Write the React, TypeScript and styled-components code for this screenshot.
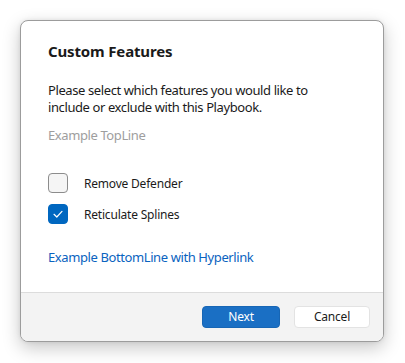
import React from "react";
import styled, { createGlobalStyle } from "styled-components";

const Global = createGlobalStyle`
  html, body { margin: 0; padding: 0; background: #ffffff; }
  body { font-family: "Noto Sans", "Open Sans", sans-serif; }
  * { box-sizing: border-box; }
`;

const Page = styled.div`
  width: 405px;
  height: 363px;
  padding: 20px 21px 21px 20px;
`;

const Dialog = styled.div`
  height: 322px;
  display: flex;
  flex-direction: column;
  background: #ffffff;
  border: 1px solid #9c9c9c;
  border-radius: 8px;
  overflow: hidden;
  box-shadow: 0 6px 18px rgba(0, 0, 0, 0.22), 0 0 4px rgba(0, 0, 0, 0.08);
`;

const Body = styled.div`
  flex: 1;
  display: flex;
  flex-direction: column;
  padding: 19px 27px 0 27px;
`;

const Title = styled.h1`
  margin: 0;
  font-size: 15px;
  line-height: 22px;
  font-weight: 700;
  letter-spacing: -0.15px;
  color: #1a1a1a;
`;

const Text = styled.p`
  margin: 20px 0 0 0;
  font-size: 13px;
  line-height: 17px;
  letter-spacing: -0.4px;
  color: #1b1b1b;
`;

const TopLine = styled.div`
  margin-top: 11px;
  font-size: 13px;
  line-height: 17px;
  letter-spacing: -0.4px;
  color: #9e9e9e;
`;

const Options = styled.div`
  margin-top: 29px;
  display: flex;
  flex-direction: column;
  gap: 11px;
`;

const Row = styled.label`
  display: flex;
  align-items: center;
  gap: 16px;
  font-size: 12px;
  letter-spacing: -0.2px;
  color: #1b1b1b;
`;

const Box = styled.span<{ $checked?: boolean }>`
  width: 20px;
  height: 20px;
  border-radius: 4px;
  flex: none;
  display: flex;
  align-items: center;
  justify-content: center;
  background: ${(p) => (p.$checked ? "#0067c0" : "#f5f5f5")};
  border: 1px solid ${(p) => (p.$checked ? "#0067c0" : "#8c8c8c")};
`;

const Link = styled.a`
  margin-top: 25px;
  font-size: 13px;
  line-height: 17px;
  letter-spacing: -0.4px;
  color: #0a63c0;
  text-decoration: none;
  cursor: pointer;
`;

const Footer = styled.div`
  height: 49px;
  flex: none;
  border-top: 1px solid #dcdcdc;
  background: #f3f3f3;
  display: flex;
  align-items: center;
  justify-content: flex-end;
  gap: 14px;
  padding: 0 13px 1px 0;
`;

const Button = styled.button<{ $primary?: boolean }>`
  height: 22px;
  width: ${(p) => (p.$primary ? "78px" : "76px")};
  border-radius: 4px;
  font-family: inherit;
  font-size: 12px;
  letter-spacing: -0.2px;
  padding: 0;
  cursor: pointer;
  background: ${(p) => (p.$primary ? "#1a6fc4" : "#ffffff")};
  color: ${(p) => (p.$primary ? "#ffffff" : "#1b1b1b")};
  border: 1px solid ${(p) => (p.$primary ? "#1766b5" : "#e3e3e3")};
`;

const Check = () => (
  <svg width="12" height="12" viewBox="0 0 12 12">
    <path d="M2 6.3 L4.8 9 L10 3.4" fill="none" stroke="#ffffff" strokeWidth="1.2" strokeLinecap="round" strokeLinejoin="round" />
  </svg>
);

export default function App() {
  return (
    <>
      <Global />
      <Page>
        <Dialog>
          <Body>
            <Title>Custom Features</Title>
            <Text>
              Please select which features you would like to
              <br />
              include or exclude with this Playbook.
            </Text>
            <TopLine>Example TopLine</TopLine>
            <Options>
              <Row>
                <Box />
                Remove Defender
              </Row>
              <Row>
                <Box $checked>
                  <Check />
                </Box>
                Reticulate Splines
              </Row>
            </Options>
            <Link>Example BottomLine with Hyperlink</Link>
          </Body>
          <Footer>
            <Button $primary>Next</Button>
            <Button>Cancel</Button>
          </Footer>
        </Dialog>
      </Page>
    </>
  );
}
